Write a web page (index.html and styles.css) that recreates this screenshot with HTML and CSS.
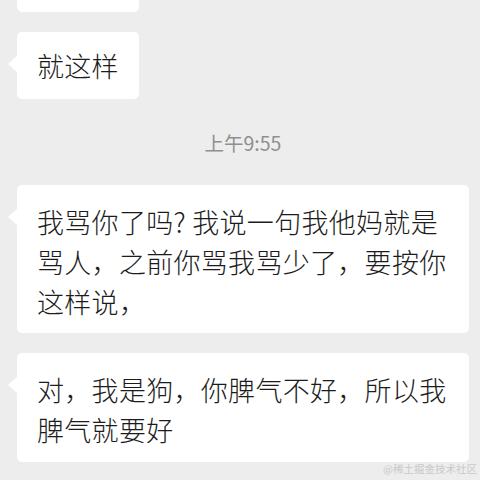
FILE: index.html
```html
<!DOCTYPE html>
<html lang="zh-CN">
<head>
    <meta charset="UTF-8">
    <meta name="viewport" content="width=device-width, initial-scale=1.0">
    <title>聊天记录</title>
    <link rel="stylesheet" href="styles.css">
</head>
<body>
<div class="chat">
    <div class="bubble bubble-cut"></div>

    <div class="bubble tail">就这样</div>

    <div class="time">上午9:55</div>

    <div class="bubble tail">我骂你了吗? 我说一句我他妈就是骂人，之前你骂我骂少了，要按你这样说，</div>

    <div class="bubble tail">对，我是狗，你脾气不好，所以我脾气就要好</div>
</div>

<div class="watermark">@稀土掘金技术社区</div>
</body>
</html>
```

FILE: styles.css
```css
html,
body {
    margin: 0;
    padding: 0;
    height: 100%;
    overflow: hidden;
}

body {
    background-color: #ededed;
    font-family: "Noto Sans CJK SC", "Noto Sans", sans-serif;
    color: #1c1c1c;
    position: relative;
}

.chat {
    display: flex;
    flex-direction: column;
    align-items: flex-start;
    padding: 0 11px 0 17px;
}

.bubble {
    position: relative;
    box-sizing: border-box;
    max-width: 452px;
    background-color: #fff;
    border-radius: 5px;
    padding: 14px 20px 13px;
    font-size: 27px;
    font-weight: 300;
    letter-spacing: 0.3px;
    line-height: 40px;
    margin-bottom: 20px;
}

/* tail on the left side */
.tail::before {
    content: "";
    position: absolute;
    left: -9px;
    top: 24px;
    border-top: 8px solid transparent;
    border-bottom: 8px solid transparent;
    border-right: 9px solid #fff;
}

.bubble-cut {
    width: 122px;
    height: 12px;
    padding: 0;
    border-radius: 0 0 5px 5px;
    margin-bottom: 20px;
}

.time {
    align-self: center;
    font-size: 19.5px;
    line-height: 26px;
    color: #8f8f8f;
    margin: 11px 0 29px;
}

.time + .bubble {
    padding-top: 17px;
    padding-bottom: 11px;
}

.time + .bubble + .bubble {
    padding-top: 17px;
    padding-bottom: 12px;
}

.watermark {
    position: absolute;
    right: 3px;
    bottom: 4px;
    font-size: 10.5px;
    line-height: 14px;
    color: #c9c9c9;
}
```
